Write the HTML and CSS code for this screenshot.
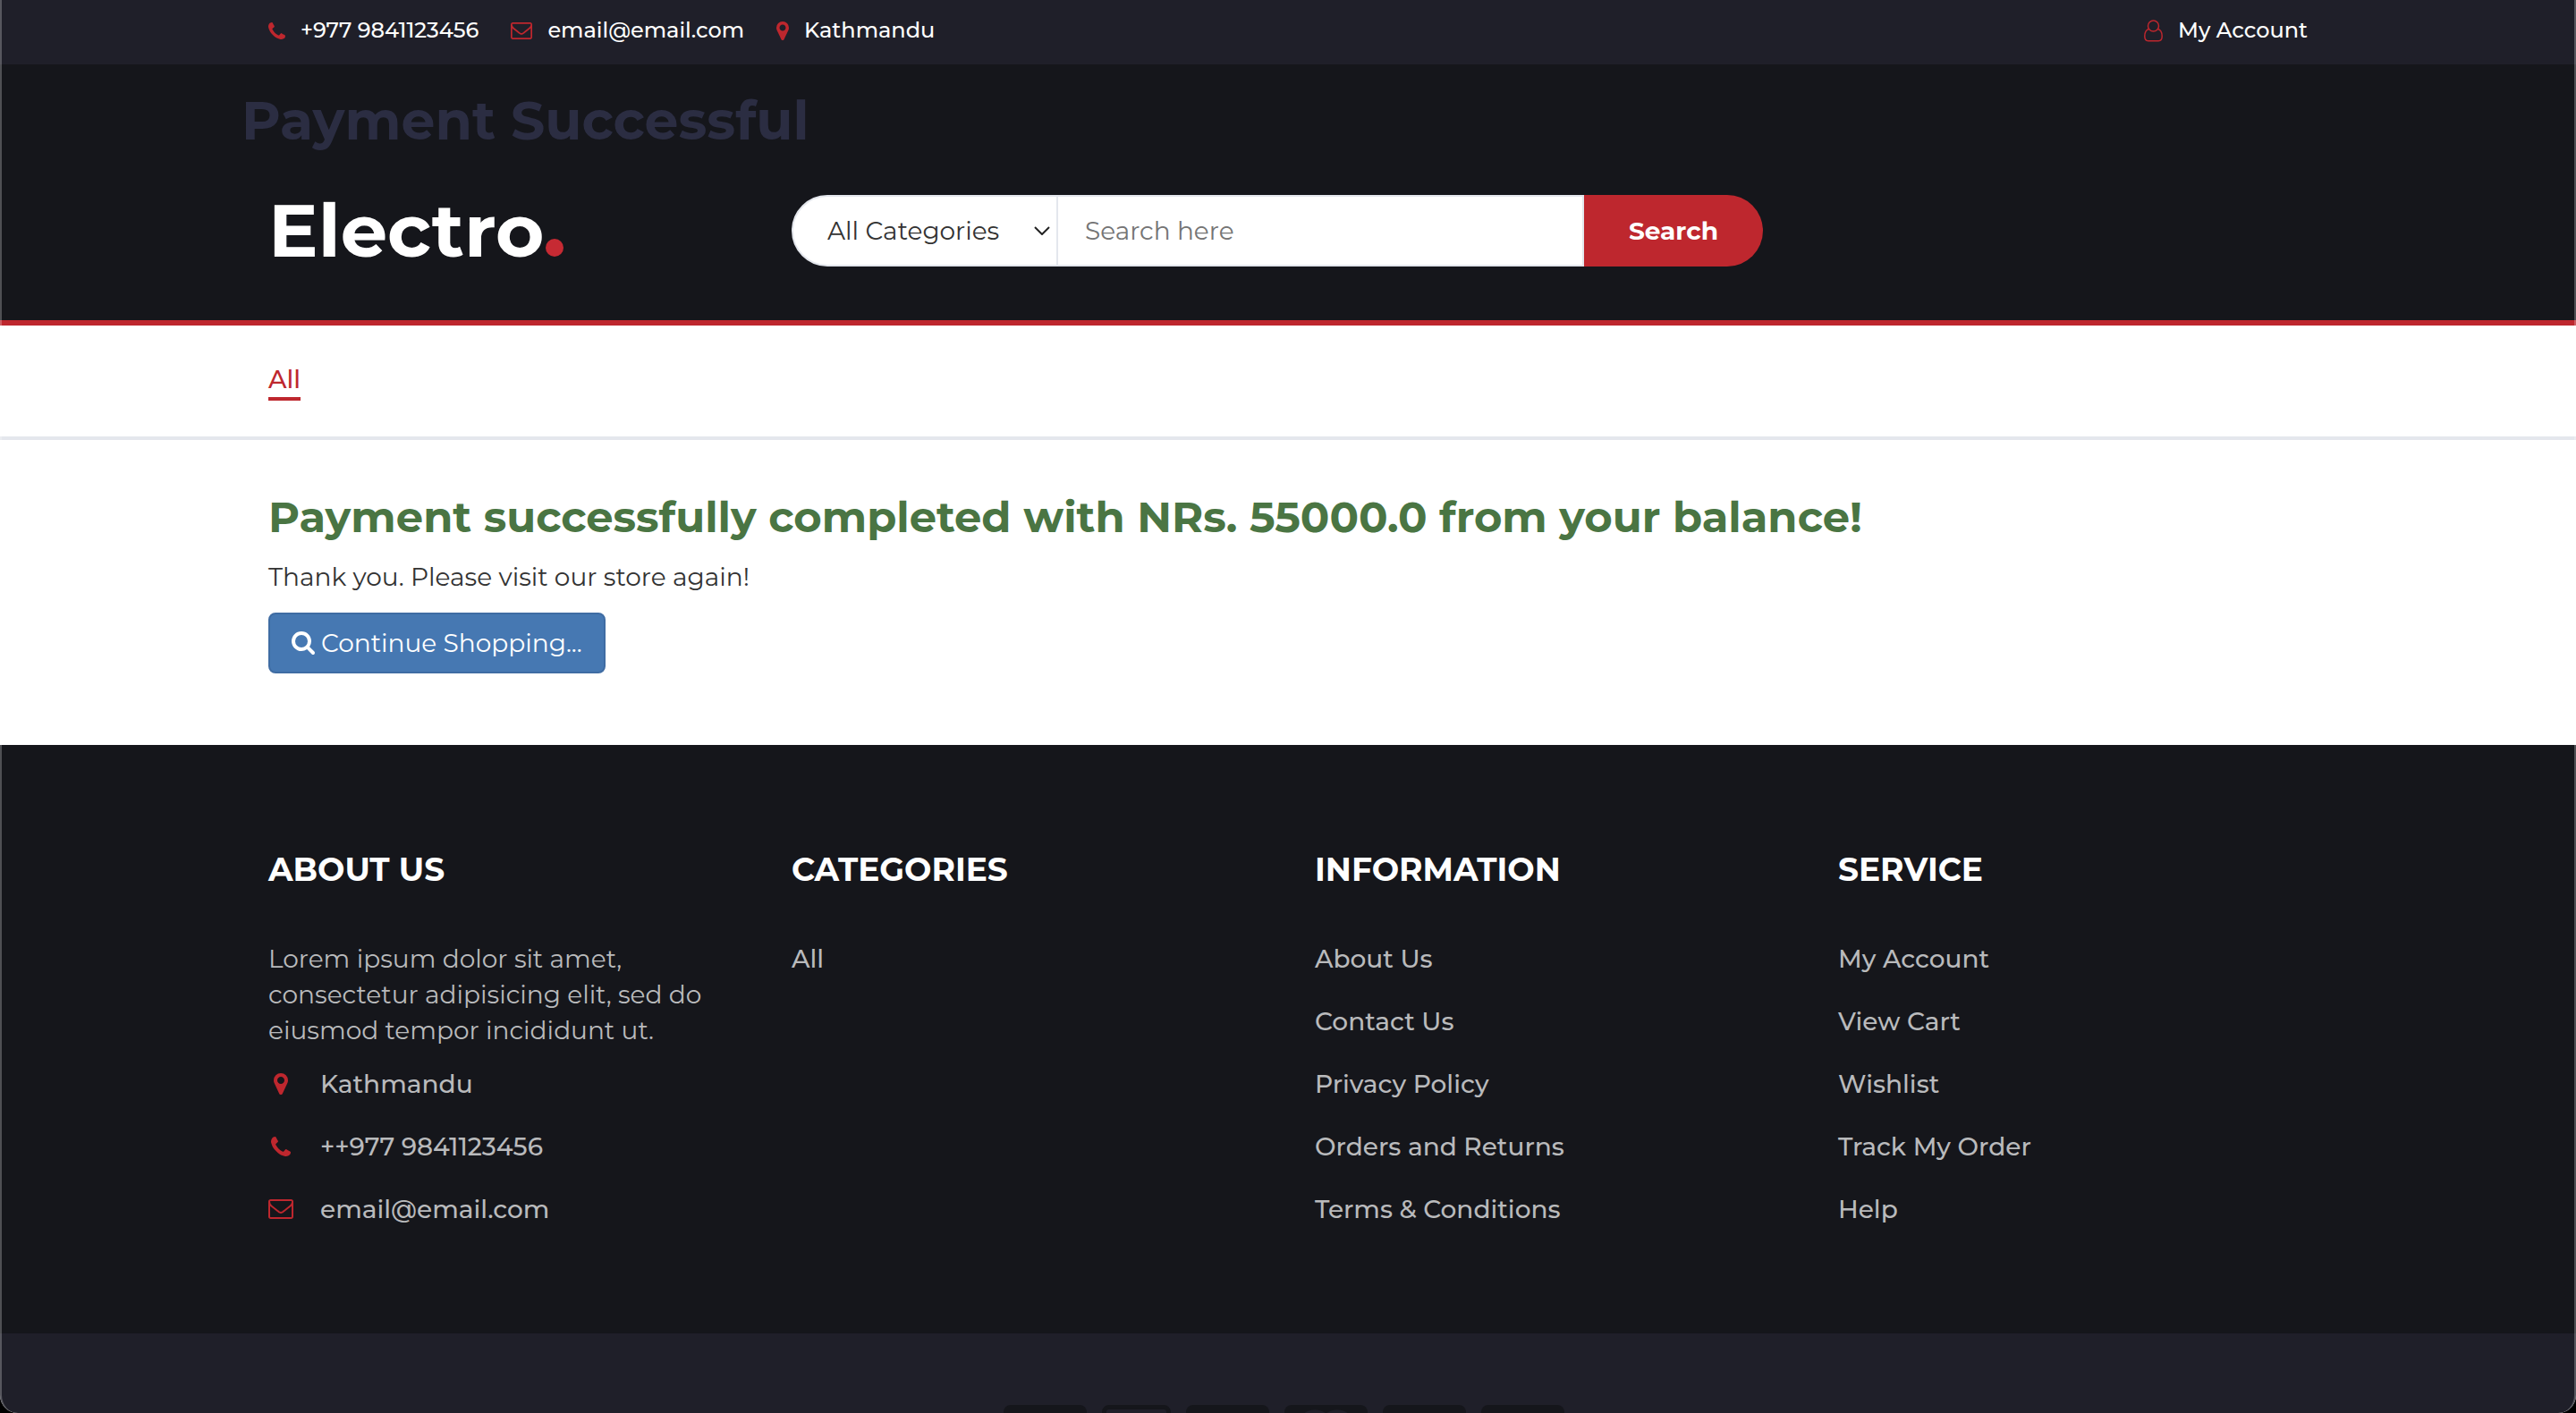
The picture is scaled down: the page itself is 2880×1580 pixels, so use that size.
FILE: index.html
```html
<!DOCTYPE html>
<html lang="en">
<head>
<meta charset="utf-8">
<title>Payment Successful</title>
<meta name="viewport" content="width=device-width, initial-scale=1">
<link rel="stylesheet" href="styles.css">
</head>
<body>
<svg class="sprite" aria-hidden="true">
  <symbol id="phone" viewBox="0 -1408 1408 1408"><path transform="scale(1 -1)" d="M1408 296q0 -27 -10 -70.500t-21 -68.500q-21 -50 -122 -106q-94 -51 -186 -51q-27 0 -53 3.500t-57.500 12.500t-47 14.500t-55.500 20.500t-49 18q-98 35 -175 83q-127 79 -264 216t-216 264q-48 77 -83 175q-3 9 -18 49t-20.500 55.500t-14.500 47t-12.500 57.500t-3.500 53q0 92 51 186q56 101 106 122q25 11 68.500 21t70.500 10q14 0 21 -3q18 -6 53 -76q11 -19 30 -54t35 -63.500t31 -53.500q3 -4 17.500 -25t21.500 -35.500t7 -28.500q0 -20 -28.500 -50t-62 -55t-62 -53t-28.500 -46q0 -9 5 -22.500t8.500 -20.500t14 -24t11.500 -19q76 -137 174 -235t235 -174q2 -1 19 -11.500t24 -14t20.500 -8.500t22.500 -5q18 0 46 28.500t53 62t55 62t50 28.500q14 0 28.500 -7t35.500 -21.500t25 -17.500q25 -15 53.500 -31t63.500 -35t54 -30q70 -35 76 -53q3 -7 3 -21z"/></symbol>
  <symbol id="envelope" viewBox="0 -1280 1792 1408"><path transform="scale(1 -1)" d="M1664 32v768q-32 -36 -69 -66q-268 -206 -426 -338q-51 -43 -83 -67t-86.500 -48.500t-102.500 -24.500h-1h-1q-48 0 -102.500 24.500t-86.500 48.500t-83 67q-158 132 -426 338q-37 30 -69 66v-768q0 -13 9.500 -22.500t22.500 -9.500h1472q13 0 22.500 9.500t9.500 22.500zM1664 1083v11v13.500t-0.500 13t-3 12.500t-5.500 9t-9 7.500t-14 2.500h-1472q-13 0 -22.500 -9.500t-9.500 -22.500q0 -168 147 -284q193 -152 401 -317q6 -5 35 -29.500t46 -37.500t44.500 -31.500t50.500 -27.500t43 -9h1h1q20 0 43 9t50.500 27.500t44.500 31.500t46 37.500t35 29.500q208 165 401 317q54 43 100.500 115.500t46.500 131.500zM1792 1120v-1088q0 -66 -47 -113t-113 -47h-1472q-66 0 -113 47t-47 113v1088q0 66 47 113t113 47h1472q66 0 113 -47t47 -113z"/></symbol>
  <symbol id="marker" viewBox="0 -1408 1024 1536"><path transform="scale(1 -1)" d="M768 896q0 106 -75 181t-181 75t-181 -75t-75 -181t75 -181t181 -75t181 75t75 181zM1024 896q0 -109 -33 -179l-364 -774q-16 -33 -47.500 -52t-67.500 -19t-67.500 19t-46.500 52l-365 774q-33 70 -33 179q0 212 150 362t362 150t362 -150t150 -362z"/></symbol>
  <symbol id="search" viewBox="0 -1408 1664 1664"><path transform="scale(1 -1)" d="M1152 704q0 185 -131.500 316.500t-316.500 131.500t-316.500 -131.500t-131.500 -316.500t131.500 -316.500t316.500 -131.500t316.500 131.500t131.500 316.500zM1664 -128q0 -52 -38 -90t-90 -38q-54 0 -90 38l-343 342q-179 -124 -399 -124q-143 0 -273.500 55.500t-225 150t-150 225t-55.500 273.500t55.500 273.500t150 225t225 150t273.500 55.500t273.500 -55.500t225 -150t150 -225t55.500 -273.500q0 -220 -124 -399l343 -343q37 -37 37 -90z"/></symbol>
  <symbol id="user" viewBox="0 0 21 25"><g fill="none" stroke="currentColor" stroke-width="1.500"><circle cx="10.500" cy="7" r="6"/><path d="M5.600 10.500C2.400 11.300.8 14.500.8 18.600c0 3.200 1.500 5.200 4 5.200h11.400c2.500 0 4-2 4-5.200 0-4.100-1.600-7.300-4.800-8.100"/></g></symbol>
</svg>
<div class="window">
  <div class="topbar">
    <div class="container topbar-row">
      <ul class="contacts">
        <li><a href="#"><svg class="icon phone"><use href="#phone"/></svg>+977 9841123456</a></li>
        <li><a href="#"><svg class="icon envelope"><use href="#envelope"/></svg>email@email.com</a></li>
        <li><a href="#"><svg class="icon marker"><use href="#marker"/></svg>Kathmandu</a></li>
      </ul>
      <a class="account" href="#"><svg class="icon user"><use href="#user"/></svg>My Account</a>
    </div>
  </div>

  <header class="header">
    <div class="header-inner">
      <h1 class="page-title">Payment Successful</h1>
      <div class="container columns">
        <a class="logo" href="#">Electro<span class="logo-dot"></span></a>
        <form class="search">
          <div class="select-wrap">
            <select class="category" aria-label="Category"><option>All Categories</option></select>
            <svg class="chevron" viewBox="0 0 18 10" aria-hidden="true"><path d="M1 1l8 8 8-8" fill="none" stroke="#222" stroke-width="2"/></svg>
          </div>
          <input class="query" type="text" placeholder="Search here" aria-label="Search here">
          <button class="search-btn" type="submit">Search</button>
        </form>
      </div>
    </div>
  </header>

  <nav class="nav">
    <div class="container"><a class="nav-link" href="#">All</a></div>
  </nav>

  <main class="container main">
    <h2 class="success">Payment successfully completed with NRs. 55000.0 from your balance!</h2>
    <p class="thanks">Thank you. Please visit our store again!</p>
    <a class="continue" href="#"><svg class="icon search-icon"><use href="#search"/></svg>Continue Shopping...</a>
  </main>

  <footer>
    <div class="footer">
      <div class="container columns">
        <section>
          <h3 class="footer-title">About Us</h3>
          <p class="about">Lorem ipsum dolor sit amet, consectetur adipisicing elit, sed do eiusmod tempor incididunt ut.</p>
          <ul class="links contact-links">
            <li><a href="#"><span class="icon-slot"><svg class="icon marker"><use href="#marker"/></svg></span>Kathmandu</a></li>
            <li><a href="#"><span class="icon-slot"><svg class="icon phone"><use href="#phone"/></svg></span>++977 9841123456</a></li>
            <li><a href="#"><span class="icon-slot"><svg class="icon envelope"><use href="#envelope"/></svg></span>email@email.com</a></li>
          </ul>
        </section>
        <section>
          <h3 class="footer-title">Categories</h3>
          <ul class="links"><li><a href="#">All</a></li></ul>
        </section>
        <section>
          <h3 class="footer-title">Information</h3>
          <ul class="links">
            <li><a href="#">About Us</a></li>
            <li><a href="#">Contact Us</a></li>
            <li><a href="#">Privacy Policy</a></li>
            <li><a href="#">Orders and Returns</a></li>
            <li><a href="#">Terms &amp; Conditions</a></li>
          </ul>
        </section>
        <section>
          <h3 class="footer-title">Service</h3>
          <ul class="links">
            <li><a href="#">My Account</a></li>
            <li><a href="#">View Cart</a></li>
            <li><a href="#">Wishlist</a></li>
            <li><a href="#">Track My Order</a></li>
            <li><a href="#">Help</a></li>
          </ul>
        </section>
      </div>
    </div>
    <div class="payments">
      <span class="card"></span><span class="card amex"></span><span class="card"></span><span class="card rings"></span><span class="card"></span><span class="card"></span>
    </div>
  </footer>
</div>
</body>
</html>
```
FILE: styles.css
```css
:root {
  --red: #be272e;
  --dark: #15161b;
  --slate: #1f1f29;
  --line: #e4e7ed;
}
* { box-sizing: border-box; }
html { background: #000; overflow: hidden; }
body {
  margin: 0;
  font-family: Montserrat, Inter, "Open Sans", sans-serif;
  font-size: 28px;
  line-height: 40px;
  color: #333;
}
h1, h2, h3, p, ul { margin: 0; padding: 0; }
ul { list-style: none; }
a { color: inherit; text-decoration: none; }
.sprite { position: absolute; width: 0; height: 0; }
.icon { display: block; flex: none; fill: currentColor; }

/* Rounded browser window with a thin translucent edge */
.window {
  height: 100vh;
  overflow: hidden;
  background: #fff;
  border-radius: 0 0 20px 20px;
}
.window::after {
  content: "";
  position: fixed;
  inset: 0;
  border: solid rgba(255, 255, 255, .25);
  border-width: 0 2px;
  border-radius: 0 0 20px 20px;
  pointer-events: none;
}
.container {
  width: 100%;
  max-width: 2340px;
  margin: 0 auto;
  padding: 0 30px;
}
.columns {
  display: grid;
  grid-template-columns: repeat(4, 1fr);
  gap: 60px;
}

.topbar { background: var(--slate); color: #fff; font-size: 24px; font-weight: 500; }
.topbar-row { display: flex; justify-content: space-between; align-items: center; height: 72px; padding-bottom: 4px; }
.contacts { display: flex; gap: 36px; }
.contacts a, .account { display: flex; align-items: center; gap: 17px; }
.topbar .icon { color: var(--red); }
.phone { width: 19px; height: 19px; }
.envelope { width: 24px; height: 19px; }
.marker { width: 14px; height: 21px; }
.user { width: 21px; height: 25px; }

.header { background: var(--dark); border-bottom: 6px solid var(--red); }
.header-inner { max-width: 2340px; margin: 0 auto; padding: 26px 0 60px; }
.page-title { font-size: 60px; line-height: 74px; font-weight: 700; color: #2b2d42; margin-bottom: 46px; }
.logo {
  display: flex;
  align-items: baseline;
  gap: 2px;
  font-size: 83px;
  line-height: 80px;
  font-weight: 700;
  color: #fff;
}
.logo-dot { width: 20px; height: 20px; border-radius: 50%; background: #c62a33; }
.search { grid-column: span 2; display: flex; height: 80px; }
.select-wrap { position: relative; flex: none; width: 298px; }
.category, .query, .search-btn { height: 100%; font: inherit; border: 2px solid var(--line); margin: 0; }
.category {
  appearance: none;
  width: 100%;
  padding: 0 38px;
  color: #333;
  background: #fff;
  border-radius: 40px 0 0 40px;
}
.chevron { position: absolute; right: 9px; top: 35px; width: 18px; height: 10px; }
.query { width: 590px; margin-left: -2px; padding: 0 30px; background: #fff; }
.query::placeholder { color: #757575; opacity: 1; }
.search-btn {
  width: 200px;
  border: 0;
  border-radius: 0 40px 40px 0;
  background: var(--red);
  color: #fff;
  font-weight: 700;
}

.nav { padding: 40px 0; border-bottom: 4px solid var(--line); }
.nav-link { display: inline-block; border-bottom: 4px solid var(--red); color: var(--red); font-weight: 500; }

.main { padding-top: 56px; padding-bottom: 80px; }
.success { margin-bottom: 17px; font-size: 48px; line-height: 60px; font-weight: 700; color: #4a7543; }
.thanks { margin-bottom: 20px; }
.continue {
  display: inline-flex;
  align-items: center;
  gap: 7px;
  height: 68px;
  padding: 0 24px;
  border: 2px solid #3f6ca3;
  border-radius: 8px;
  background: #4678b2;
  color: #fff;
}
.search-icon { width: 26px; height: 26px; }

.footer { background: var(--dark); color: #b9babc; padding: 119px 0; }
.footer-title { margin-bottom: 60px; font-size: 36px; line-height: 40px; font-weight: 700; text-transform: uppercase; color: #fff; }
.about { margin-bottom: 20px; }
.links { display: grid; gap: 30px; font-weight: 500; }
.contact-links a { display: flex; align-items: center; gap: 30px; }
.icon-slot { display: flex; justify-content: center; width: 28px; color: var(--red); }
.footer .phone { width: 22px; height: 22px; }
.footer .envelope { width: 28px; height: 22px; }
.footer .marker { width: 16px; height: 24px; }

.payments { display: flex; justify-content: center; gap: 17px; min-height: 240px; padding: 80px 10px 0 0; background: var(--slate); }
.card { width: 93px; height: 60px; border-radius: 8px; background: var(--dark); }
.amex { width: 77px; border: 5px solid var(--dark); background: var(--slate); }
.rings {
  background:
    radial-gradient(circle at 34px 26px, var(--slate) 20px, transparent 21px),
    radial-gradient(circle at 59px 26px, var(--slate) 20px, transparent 21px),
    var(--dark);
}
```
